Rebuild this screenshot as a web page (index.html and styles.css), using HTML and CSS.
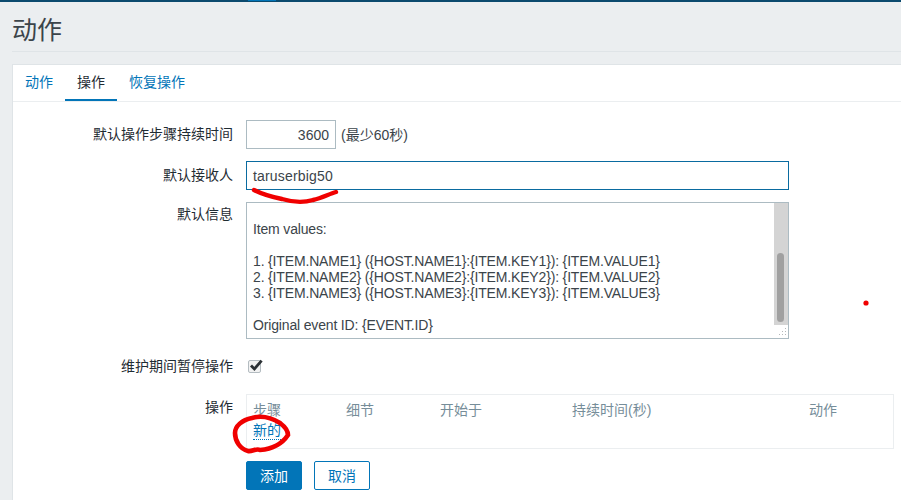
FILE: index.html
```html
<!DOCTYPE html>
<html lang="zh">
<head>
<meta charset="utf-8">
<title>动作</title>
<link rel="stylesheet" href="styles.css">
</head>
<body>
<div class="topbar"><span class="topbar-mark"></span></div>
<header class="page-head"><h1>动作</h1></header>
<main class="card">
  <nav class="tabs">
    <a class="tab">动作</a>
    <a class="tab active">操作</a>
    <a class="tab">恢复操作</a>
  </nav>
  <form class="form">
    <div class="row">
      <label class="label">默认操作步骤持续时间</label>
      <div class="field inline">
        <div class="input short">3600</div>
        <span class="hint">(最少60秒)</span>
      </div>
    </div>
    <div class="row">
      <label class="label">默认接收人</label>
      <div class="field"><div class="input wide focus">taruserbig50</div></div>
    </div>
    <div class="row">
      <label class="label label-top">默认信息</label>
      <div class="field">
        <div class="textarea">
<pre class="message">

Item values:

1. {ITEM.NAME1} ({HOST.NAME1}:{ITEM.KEY1}): {ITEM.VALUE1}
2. {ITEM.NAME2} ({HOST.NAME2}:{ITEM.KEY2}): {ITEM.VALUE2}
3. {ITEM.NAME3} ({HOST.NAME3}:{ITEM.KEY3}): {ITEM.VALUE3}

Original event ID: {EVENT.ID}</pre>
          <div class="scrolltrack"><div class="scrollthumb"></div></div>
          <svg class="grip" width="12" height="12" viewBox="0 0 12 12"><g fill="#b4b8ba"><rect x="9" y="2" width="1" height="1"/><rect x="6" y="5" width="1" height="1"/><rect x="9" y="5" width="1" height="1"/><rect x="3" y="8" width="1" height="1"/><rect x="6" y="8" width="1" height="1"/><rect x="9" y="8" width="1" height="1"/></g></svg>
        </div>
      </div>
    </div>
    <div class="row row-check">
      <label class="label">维护期间暂停操作</label>
      <div class="field">
        <span class="checkbox">
          <svg width="14" height="13" viewBox="0 0 14 13"><path d="M2 6.5 L5.4 10 L12.6 1.6" fill="none" stroke="#2b3135" stroke-width="2.8"/></svg>
        </span>
      </div>
    </div>
    <div class="row row-ops">
      <label class="label label-ops">操作</label>
      <div class="field">
        <div class="ops">
          <div class="ops-head">
            <span>步骤</span><span>细节</span><span>开始于</span><span>持续时间(秒)</span><span>动作</span>
          </div>
          <a class="new-link">新的</a>
        </div>
      </div>
    </div>
    <div class="row row-buttons">
      <span class="label"></span>
      <div class="field buttons">
        <button type="button" class="btn primary">添加</button>
        <button type="button" class="btn">取消</button>
      </div>
    </div>
  </form>
</main>
<svg class="scribbles" width="901" height="500" viewBox="0 0 901 500">
  <path d="M254 190 C262 194 272 197 282 199 C292 202 303 203 313 200 C322 198 329 194 336 192" fill="none" stroke="#f00000" stroke-width="4.4" stroke-linecap="round"/>
  <path d="M280 423 C272 418 262 415 252 418 C242 420 235 426 235 433 C235 441 240 449 248 451 C252 452 256 448 260 450 C272 449 282 444 288 435 C288 431 284 426 280 423" fill="none" stroke="#f00000" stroke-width="4.6" stroke-linecap="round"/>
  <circle cx="866" cy="303" r="2.6" fill="#f00000"/>
</svg>
</body>
</html>
```
FILE: styles.css
```css
* { box-sizing: border-box; }
html, body { margin: 0; height: 100%; overflow: hidden; }
body {
  position: relative;
  background: #ebeef0;
  color: #1f2c33;
  font: 14px/16px "Liberation Sans", "Noto Sans CJK SC", sans-serif;
}
.topbar { height: 2px; background: #0b4a6e; }
.topbar-mark { display: block; width: 28px; height: 1px; margin-left: 248px; background: #0275b8; }
.page-head { height: 50px; margin: 0 0 0 12px; border-bottom: 1px solid #dfe4e7; }
.page-head h1 {
  margin: 0;
  padding-top: 13px;
  font-size: 25px;
  line-height: 30px;
  font-weight: 400;
  color: #3b444a;
}
.card {
  margin: 12px 0 0 12px;
  height: 440px;
  background: #fff;
  border-top: 1px solid #dfe4e7;
  border-left: 1px solid #dfe4e7;
}
.tabs { display: flex; height: 37px; border-bottom: 1px solid #ebeef0; }
.tab { padding: 9px 12px 0; color: #0275b8; height: 36px; }
.tab.active { color: #1f2c33; border-bottom: 2px solid #0275b8; }
.form { display: flex; flex-direction: column; padding-top: 18px; }
.row { display: flex; gap: 13px; margin-bottom: 12px; }
.label { flex: 0 0 220px; text-align: right; padding-top: 6px; color: #1f2c33; }
.label-top { padding-top: 4px; }
.field { flex: none; }
.inline { display: flex; align-items: center; gap: 5px; }
.input {
  height: 29px;
  border: 1px solid #acbbc2;
  padding: 6px;
  color: #1f2c33;
  background: #fff;
}
.short { width: 90px; text-align: right; color: #3b444a; }
.hint { color: #3b444a; }
.wide { width: 543px; padding-left: 6px; letter-spacing: .17px; color: #3b444a; }
.focus { border-color: #0a6ba0; }
.textarea {
  position: relative;
  width: 543px;
  height: 137px;
  border: 1px solid #acbbc2;
  overflow: hidden;
}
.message {
  margin: 0;
  padding: 2px 6px;
  font: inherit;
  letter-spacing: -.16px;
  color: #3b444a;
}
.scrolltrack {
  position: absolute;
  right: 0;
  top: 0;
  width: 14px;
  height: 122px;
  background: #d4d4d4;
}
.scrollthumb {
  position: absolute;
  left: 3px;
  top: 50px;
  width: 7px;
  height: 69px;
  border-radius: 4px;
  background: #a0a0a0;
}
.grip { position: absolute; right: 0; bottom: 0; }
.row-check { margin: 0; height: 34px; }
.row-check .label { padding-top: 7px; }
.checkbox {
  display: block;
  position: relative;
  width: 13px;
  height: 13px;
  margin: 9px 0 0 2px;
  border: 1px solid #b4bcc1;
  border-radius: 2px;
  background: #f2f2f2;
}
.checkbox svg { position: absolute; left: 0; top: -2px; }
.row-ops { margin: 9px 0 12px; }
.label-ops { padding-top: 5px; }
.ops {
  width: 648px;
  height: 55px;
  border: 1px solid #ebeef0;
  padding: 7px 6px 0;
}
.ops-head {
  display: grid;
  grid-template-columns: 93px 94px 132px 237px 1fr;
  color: #768d99;
  height: 20px;
}
.new-link {
  display: inline-block;
  color: #0275b8;
  line-height: 16px;
  border-bottom: 1px dotted #0275b8;
  padding-bottom: 1px;
}
.row-buttons { margin: 0; }
.buttons { display: flex; gap: 12px; }
.btn {
  width: 56px;
  height: 29px;
  padding: 0;
  border: 1px solid #0275b8;
  border-radius: 2px;
  background: #fff;
  color: #0275b8;
  font: inherit;
}
.primary { background: #0275b8; color: #fff; }
.scribbles { position: absolute; left: 0; top: 0; pointer-events: none; }
```
